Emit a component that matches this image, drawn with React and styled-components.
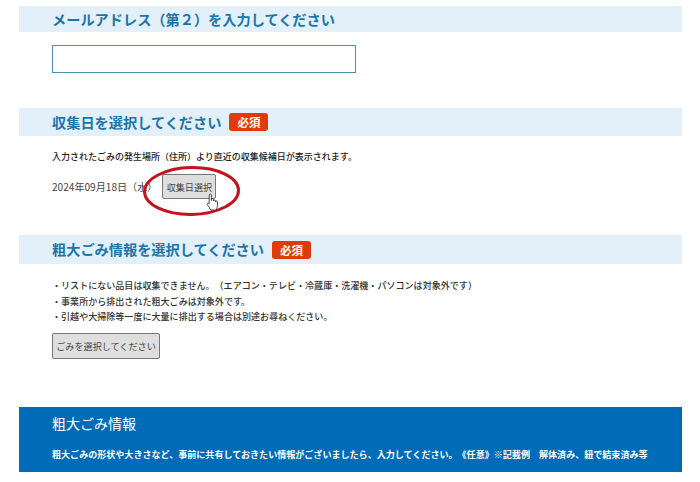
import React from "react";
import styled, { createGlobalStyle } from "styled-components";

const Global = createGlobalStyle`
  html, body { margin: 0; padding: 0; background: #fff; }
  body {
    font-family: "Noto Sans CJK JP", "Liberation Sans", sans-serif; color: #333;
    text-spacing-trim: space-all; font-feature-settings: "chws" 0;
  }
`;
const Page = styled.div`
  width: 700px; height: 482px; overflow: hidden; box-sizing: border-box;
  padding: 6px 18px 0 19px;
  display: flex; flex-direction: column;
`;
const SectionHead = styled.div`
  height: ${p => p.$h}px; margin-bottom: ${p => p.$mb}px;
  background: #e3f0f9; padding-left: 33px;
  display: flex; align-items: center; gap: 8px;
`;
const Title = styled.h2`
  margin: 0; font-size: 14.2px; font-weight: 700; color: #1b75ad; line-height: 1;
`;
const Required = styled.span`
  width: 39px; height: 18px; border-radius: 3px; background: #dd3b0a; color: #fff;
  font-size: 11.5px; font-weight: 700; display: flex; align-items: center; justify-content: center;
`;
const Body = styled.div`
  padding-left: 33px; display: flex; flex-direction: column; align-items: flex-start;
`;
const Input = styled.input`
  box-sizing: border-box; width: 304px; height: 28px; margin: 0 0 35px;
  border: 1px solid #4f8fa8; background: #fff; outline: none; padding: 0 6px;
`;
const Note = styled.p`
  margin: 0 0 10px; font-size: 9px; line-height: 14px; font-weight: 500; color: #222;
`;
const DateRow = styled.div`
  position: relative; display: flex; align-items: center; gap: 5px;
  margin-bottom: 36px; font-size: 10.1px; color: #444; height: 25px;
`;
const GreyButton = styled.button`
  box-sizing: border-box; height: ${p => p.$h}px; width: ${p => p.$w}px; padding: 0;
  border: 1px solid #777; border-radius: 2px; background: #dedede; color: #444;
  font: 400 9.1px "Noto Sans CJK JP", sans-serif;
  display: flex; align-items: center; justify-content: center;
`;
const Mark = styled.svg`
  position: absolute; left: 91px; top: -8px; overflow: visible; pointer-events: none;
`;
const Cursor = styled.svg`
  position: absolute; left: 154px; top: 19px; pointer-events: none;
`;
const Rules = styled.ul`
  list-style: none; margin: 0 0 8px; padding: 0;
`;
const Rule = styled.li`
  font-size: 9.05px; line-height: 15.5px; height: 15.5px; font-weight: 500; color: #333;
`;
const Banner = styled.section`
  margin-top: 48px; height: 65px; background: #006cb8; color: #fff;
  padding: 7px 0 0 33px; box-sizing: border-box;
`;
const BannerTitle = styled.h3`
  margin: 0 0 16px; font-size: 14px; line-height: 18px; font-weight: 400;
`;
const BannerText = styled.p`
  margin: 0; font-size: 9.06px; line-height: 13px; font-weight: 700; white-space: nowrap;
`;

export default function App() {
  return (
    <>
      <Global />
      <Page>
        <SectionHead $h={26} $mb={13}>
          <Title>メールアドレス（第２）を入力してください</Title>
        </SectionHead>
        <Body>
          <Input type="text" />
        </Body>
        <SectionHead $h={28} $mb={14}>
          <Title>収集日を選択してください</Title>
          <Required>必須</Required>
        </SectionHead>
        <Body>
          <Note>入力されたごみの発生場所（住所）より直近の収集候補日が表示されます。</Note>
          <DateRow>
            <span>2024年09月18日（水）</span>
            <GreyButton $w={54} $h={25}>収集日選択</GreyButton>
            <Mark width="97" height="50" viewBox="0 0 97 50">
              <ellipse cx="48.5" cy="25" rx="47" ry="23.5" fill="none" stroke="#c8111f" strokeWidth="3" transform="rotate(-1 48 25)" />
            </Mark>
            <Cursor width="13" height="18" viewBox="0 0 13 18">
              <path d="M3.2 10V2.2a1.1 1.1 0 0 1 2.2 0V7.5V6.6a1 1 0 0 1 2 0V8a1 1 0 0 1 2 0v1a1 1 0 0 1 2 0v3.6c0 1.6-.7 2.4-1 4.4H4.6C4 15 2.8 13.5 1.3 11.8c-.8-1 .6-2.3 1.9-1.1Z" fill="#fff" stroke="#333" strokeWidth=".9" strokeLinejoin="round" />
            </Cursor>
          </DateRow>
        </Body>
        <SectionHead $h={29} $mb={14}>
          <Title>粗大ごみ情報を選択してください</Title>
          <Required>必須</Required>
        </SectionHead>
        <Body>
          <Rules>
            <Rule>・リストにない品目は収集できません。（エアコン・テレビ・冷蔵庫・洗濯機・パソコンは対象外です）</Rule>
            <Rule>・事業所から排出された粗大ごみは対象外です。</Rule>
            <Rule>・引越や大掃除等一度に大量に排出する場合は別途お尋ねください。</Rule>
          </Rules>
          <GreyButton $w={108} $h={26}>ごみを選択してください</GreyButton>
        </Body>
        <Banner>
          <BannerTitle>粗大ごみ情報</BannerTitle>
          <BannerText>粗大ごみの形状や大きさなど、事前に共有しておきたい情報がございましたら、入力してください。《任意》※記載例　解体済み、紐で結束済み等</BannerText>
        </Banner>
      </Page>
    </>
  );
}
